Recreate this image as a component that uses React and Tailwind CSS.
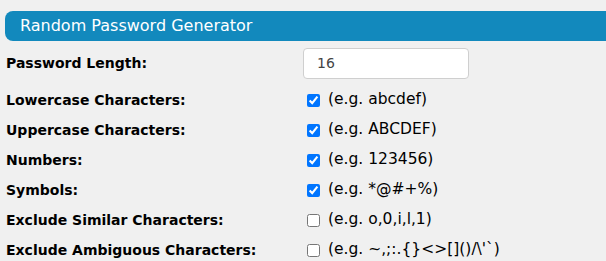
import React from "react";

const rows = [
  { label: "Lowercase Characters:", hint: "(e.g. abcdef)", checked: true },
  { label: "Uppercase Characters:", hint: "(e.g. ABCDEF)", checked: true },
  { label: "Numbers:", hint: "(e.g. 123456)", checked: true },
  { label: "Symbols:", hint: "(e.g. *@#+%)", checked: true },
  { label: "Exclude Similar Characters:", hint: "(e.g. o,0,i,l,1)", checked: false },
  { label: "Exclude Ambiguous Characters:", hint: "(e.g. ~,;:.{}<>[]()/\\'`)", checked: false },
];

export default function App() {
  return (
    <div className="w-[606px] h-[261px] overflow-hidden bg-[#f0f0f0] pt-[11px] text-black" style={{ fontFamily: "'DejaVu Sans', Verdana, sans-serif" }}>
      <div className="ml-[5px] h-[30px] rounded-l-[8px] bg-[#1289bd] pl-[15px] flex items-center text-white text-[16px] leading-none">
        Random Password Generator
      </div>
      <div className="flex flex-col">
        <div className="h-[44px] flex items-center">
          <div className="w-[297px] pl-[6px] font-bold text-[14px]">Password Length:</div>
          <div className="ml-[6px] w-[166px] h-[31px] bg-white border border-[#cfcfcf] rounded-[4px] flex items-center pl-[13px] text-[14px] text-[#444]">16</div>
        </div>
        {rows.map((r) => (
          <div key={r.label} className="h-[30px] flex items-center">
            <div className="w-[297px] pl-[6px] font-bold text-[14px]">{r.label}</div>
            <input type="checkbox" defaultChecked={r.checked} className="ml-[10px] mr-[8px] w-[13px] h-[13px] m-0" />
            <span className="text-[15.5px]">{r.hint}</span>
          </div>
        ))}
      </div>
    </div>
  );
}
